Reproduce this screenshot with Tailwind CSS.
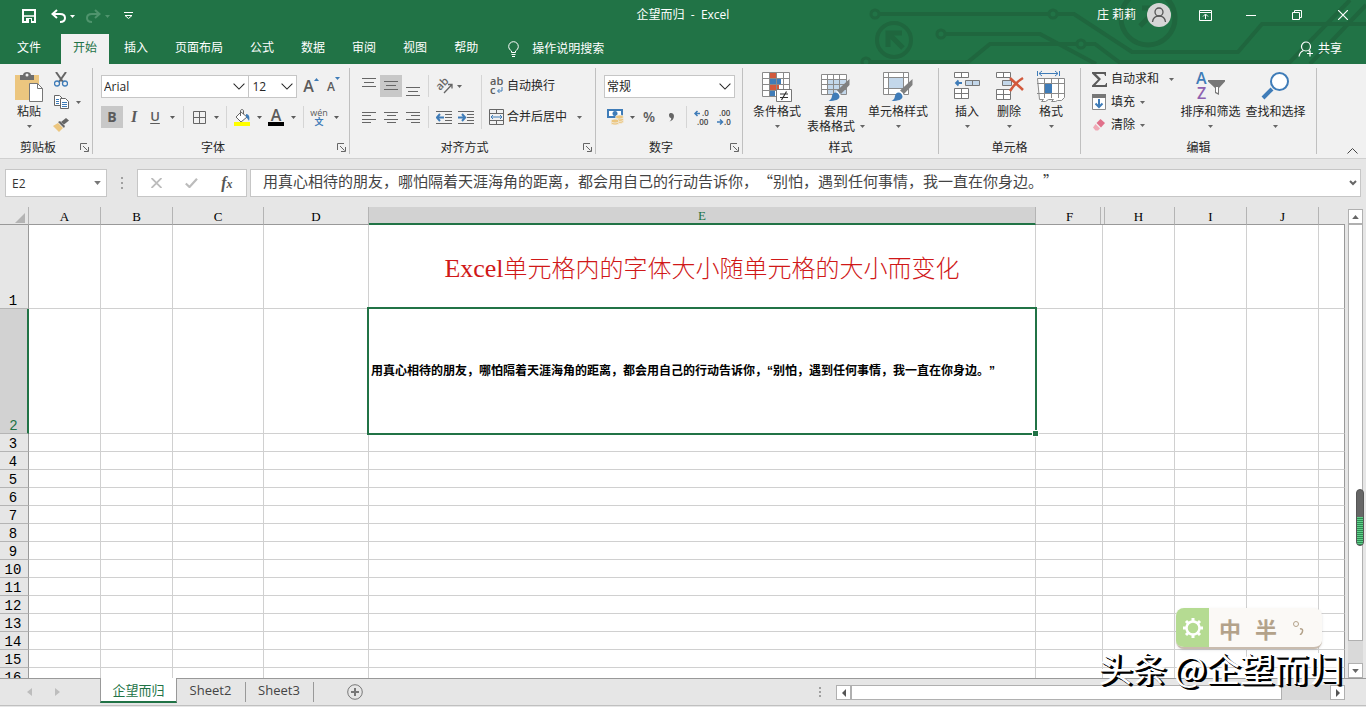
<!DOCTYPE html>
<html lang="zh-CN">

<head>
    <meta charset="UTF-8">
    <meta name="viewport" content="width=device-width, initial-scale=1.0">
    <title>企望而归 - Excel</title>
    <script src="https://cdn.jsdelivr.net/npm/@tailwindcss/browser@4"></script>
</head>

<body class="relative flex h-screen flex-col overflow-hidden bg-[#e6e6e6] font-['Open_Sans','Noto_Sans_CJK_SC',sans-serif] text-xs text-[#333]">
    <!-- Shared icons -->
    <svg class="hidden">
        <symbol id="caret" viewBox="0 0 5 3"><path d="M0 0h5L2.500 3z" fill="currentColor"/></symbol>
        <symbol id="chevron" viewBox="0 0 14 8"><path d="M.7.7 7 7 13.300.7" fill="none" stroke="currentColor" stroke-width="1.200"/></symbol>
        <symbol id="launcher" viewBox="0 0 9 9"><path d="M.5 7V.5H7M3 3l4.500 4.500M8.500 4v4.500H4" fill="none" stroke="#666"/></symbol>
        <symbol id="brush" viewBox="0 0 22 24"><path d="M21.500 1v6L13 16l-4-3.500z" fill="#808080"/><path d="M9 13l4 4-1.500 1.500L7.500 14.500z" fill="#fff"/><path d="M7.500 14.500c2 0 4 2 4 4 0 3-4 4.500-11 4.500 3-1.500 3-3 3.500-5 .5-2 1.500-3.500 3.500-3.500z" fill="#3f7cb8"/></symbol>
    </svg>

    <!-- Title bar and tabs -->
    <header class="relative bg-[#217346] text-white">
        <svg class="absolute top-0 right-0" width="506" height="64" fill="none" stroke="#1f663e" stroke-width="4">
            <circle cx="15" cy="14" r="4" stroke-width="3"/><circle cx="193" cy="14" r="4" stroke-width="3"/>
            <circle cx="81" cy="34" r="4" stroke-width="3"/><circle cx="221" cy="44" r="4" stroke-width="3"/><circle cx="6" cy="62" r="4" stroke-width="3"/>
            <path d="M19 14h170M197 14h17l58 38h106l24-28h104M85 34h95l56 30M10 62h98l22-18h87M225 44h10l24 18h171L490 0M450 64l56-59"/>
            <circle cx="34" cy="40" r="17"/><path d="M28 47V33h14M29 34l14 14" stroke-width="5"/>
            <circle cx="288" cy="18" r="27" stroke-width="5"/><path d="M280 26l14-14M282 8h14v14" stroke-width="5"/>
        </svg>
        <div class="relative grid h-[34px] grid-cols-[1fr_auto_1fr]">
            <div class="flex h-8 items-center pl-[22px]">
                <button aria-label="保存"><svg width="14" height="14" fill="none" stroke="#fff" stroke-width="2"><path d="M1 1h12v12H1z"/><path d="M2 7h10" stroke-width="1.500"/><path d="M4 9h6v4H4z" fill="#fff" stroke="none"/><path d="M7 10h2v4H7z" fill="#217346" stroke="none"/></svg></button>
                <button class="ml-[15px]" aria-label="撤消"><svg width="15" height="14" fill="none" stroke="#fff" stroke-width="2"><path d="M6 1 1.500 5 6 9M2 5h7c3 0 5 1.500 5 4s-2 4-5 4"/></svg></button>
                <button class="ml-1" aria-label="撤消列表"><svg class="h-[3px] w-[5px]"><use href="#caret"/></svg></button>
                <button class="ml-[11px] text-[#4f946d]" aria-label="恢复"><svg width="15" height="14" fill="none" stroke="currentColor" stroke-width="2"><path d="M9 1l4.500 4L9 9M13 5H6C3 5 1 6.500 1 9s2 4 5 4"/></svg></button>
                <button class="ml-1 text-[#4f946d]" aria-label="恢复列表"><svg class="h-[3px] w-[5px]"><use href="#caret"/></svg></button>
                <button class="ml-[14px]" aria-label="自定义快速访问工具栏"><svg width="9" height="8" fill="none" stroke="#fff"><path d="M0 .5h9M1 3.500l3.500 3L8 3.500z"/></svg></button>
            </div>
            <h1 class="leading-[30px]">企望而归&nbsp; -&nbsp; Excel</h1>
            <div class="flex h-[30px] items-center justify-end">
                <span>庄 莉莉</span>
                <button class="mr-[11px] ml-[11px] size-6 rounded-full bg-[#d6d6d6]" aria-label="帐户"><svg width="24" height="24" fill="none" stroke="#555" stroke-width="1.300"><circle cx="12" cy="9" r="4"/><path d="M5.500 19c.5-4 3-6 6.500-6s6 2 6.500 6"/></svg></button>
                <button class="flex w-[46px] justify-center" aria-label="功能区显示选项"><svg width="13" height="11" fill="none" stroke="#fff"><path d="M.5.5h12v10H.5zM1 2.500h11M6.500 9V4.500M4 6.500l2.500-2.500L9 6.500"/></svg></button>
                <button class="flex w-[46px] justify-center" aria-label="最小化"><svg width="10" height="10" stroke="#fff"><path d="M0 5.500h10"/></svg></button>
                <button class="flex w-[46px] justify-center" aria-label="还原"><svg width="10" height="10" fill="none" stroke="#fff"><path d="M.5 2.500h7v7h-7zM2.500 2V.5h7v7H8"/></svg></button>
                <button class="flex w-[46px] justify-center" aria-label="关闭"><svg width="10" height="10" stroke="#fff" stroke-width="1.200"><path d="M0 0l10 10M10 0 0 10"/></svg></button>
            </div>
        </div>
        <nav class="relative flex h-[30px] items-stretch gap-[3px] pl-[5px] leading-[28px]">
            <a href="#" class="mr-[5px] px-3">文件</a>
            <a href="#" class="bg-[#f1f1f1] px-3 text-[#217346]">开始</a>
            <a href="#" class="px-3">插入</a>
            <a href="#" class="px-3">页面布局</a>
            <a href="#" class="px-3">公式</a>
            <a href="#" class="px-3">数据</a>
            <a href="#" class="px-3">审阅</a>
            <a href="#" class="px-3">视图</a>
            <a href="#" class="px-3">帮助</a>
            <button class="ml-[15px] flex items-center gap-[13px]">
                <svg width="11" height="16" fill="none" stroke="#fff"><path d="M3.500 11.500V10C2 9 .7 7.500.7 5.500a4.800 4.800 0 0 1 9.600 0C10.300 7.500 9 9 7.500 10v1.500zM3.500 13.500h4M4 15.500h3"/></svg>
                操作说明搜索
            </button>
            <button class="mr-6 ml-auto flex items-center gap-1">
                <svg width="16" height="16" fill="none" stroke="#fff" stroke-width="1.200"><circle cx="8" cy="5.500" r="4.500"/><path d="M1 15.500c.5-3.500 2-5 4.500-6M10.500 9.500l1.500 1M12 9.500v6M9 12.500h6"/></svg>
                共享
            </button>
        </nav>
    </header>

    <!-- Ribbon -->
    <section class="flex h-[95px] border-b border-[#d0d0d0] bg-[#f1f1f1] py-1 whitespace-nowrap text-[#262626]">
        <!-- Clipboard -->
        <div class="flex w-[93px] flex-col border-r border-[#c0c0c0]">
            <div class="flex flex-1 pl-2">
                <button class="flex w-[42px] flex-col items-center pt-1">
                    <svg width="30" height="30"><path d="M1 3h24v25H1z" fill="#ecc67f"/><path d="M6 3h3c0-4 8-4 8 0h3v5H6z" fill="#6d6d6d"/><circle cx="13" cy="3" r="1.500" fill="#f1f1f1"/><path d="M15.500 11.500h8l5 5v13h-13z" fill="#fff" stroke="#777"/><path d="M23.500 11.500v5h5" fill="none" stroke="#777"/></svg>
                    <span class="mt-0.5 leading-[15px]">粘贴</span>
                    <span class="flex h-[15px] items-center text-[#666]"><svg class="h-[3px] w-[5px]"><use href="#caret"/></svg></span>
                </button>
                <div class="flex flex-col">
                    <button class="flex h-[23px] w-[22px] items-center justify-center" aria-label="剪切"><svg width="14" height="15" fill="none"><path d="M2 0l7 10M12 0 5 10" stroke="#666" stroke-width="2"/><circle cx="3" cy="11.500" r="2.500" stroke="#3f7cb8" stroke-width="1.300"/><circle cx="11" cy="11.500" r="2.500" stroke="#3f7cb8" stroke-width="1.300"/></svg></button>
                    <div class="flex h-[22px] items-center">
                        <button class="flex w-[22px] justify-center" aria-label="复制"><svg width="15" height="14" fill="#fff" stroke="#666"><path d="M.5.5h5l3 3v7h-8z"/><path d="M2 4.500h3M2 6.500h3M2 8.500h3" stroke="#3f7cb8"/><path d="M6.500 3.500h5l3 3v7h-8z"/><path d="M8 7.500h5M8 9.500h5M8 11.500h5" stroke="#3f7cb8"/></svg></button>
                        <button class="flex w-3 justify-center text-[#666]" aria-label="复制选项"><svg class="h-[3px] w-[5px]"><use href="#caret"/></svg></button>
                    </div>
                    <button class="flex h-[23px] w-[22px] items-center justify-center" aria-label="格式刷"><svg width="16" height="14"><path d="M0 8l5-3 5 5-4 4z" fill="#ecc67f"/><path d="M5 4l2-1 5 5-1 2z" fill="#666"/><path d="M8 4l5-4 3 2.500-5 4z" fill="#666"/></svg></button>
                </div>
            </div>
            <div class="flex h-[13px] leading-[13px]"><span class="flex-1 text-center">剪贴板</span><button class="w-4 pl-1" aria-label="剪贴板设置"><svg class="size-[9px]"><use href="#launcher"/></svg></button></div>
        </div>

        <!-- Font -->
        <div class="flex w-[257px] flex-col border-r border-[#c0c0c0]">
            <div class="flex flex-1 flex-col gap-[9px] pt-[7px] pl-2">
                <div class="flex h-[22px] items-center">
                    <div class="relative h-[23px] w-[149px]">
                        <select class="h-full w-full appearance-none border border-[#c6c6c6] bg-white pt-0.5 pl-0.5" aria-label="字体"><option>Arial</option></select>
                        <svg class="pointer-events-none absolute top-2 right-1 h-[7px] w-3"><use href="#chevron"/></svg>
                    </div>
                    <div class="relative h-[23px] w-[48px]">
                        <select class="h-full w-full appearance-none border border-l-0 border-[#c6c6c6] bg-white pt-0.5 pl-[3px]" aria-label="字号"><option>12</option></select>
                        <svg class="pointer-events-none absolute top-2 right-1 h-[7px] w-3"><use href="#chevron"/></svg>
                    </div>
                    <button class="ml-1.5 flex w-[22px] text-base leading-4 font-semibold text-[#5b5b5b]" aria-label="增大字号">A<svg class="text-[#3f7cb8]" width="5" height="3"><path d="M2.500 0 5 3H0z" fill="currentColor"/></svg></button>
                    <button class="ml-0.5 flex w-[22px] text-xs leading-4 font-semibold text-[#5b5b5b]" aria-label="减小字号"><span class="pt-0.5">A</span><svg class="h-[3px] w-[5px] text-[#3f7cb8]"><use href="#caret"/></svg></button>
                </div>
                <div class="flex h-[22px] items-center text-[#5b5b5b]">
                    <button class="h-full w-[22px] bg-[#c8c8c8] text-sm font-bold" aria-label="加粗">B</button>
                    <button class="w-[22px] font-['Liberation_Serif'] text-base font-bold italic" aria-label="倾斜">I</button>
                    <button class="w-5 text-[13px] font-semibold underline underline-offset-2" aria-label="下划线">U</button>
                    <button class="flex w-[14px] justify-center" aria-label="下划线选项"><svg class="h-[3px] w-[5px]"><use href="#caret"/></svg></button>
                    <i class="mx-1 h-[22px] w-px bg-[#d5d5d5]"></i>
                    <button class="flex w-[22px] justify-center" aria-label="边框"><svg width="13" height="13" fill="none" stroke="#666"><path d="M.5.5h12v12H.5zM6.500 0v13M0 6.500h13"/></svg></button>
                    <button class="flex w-3 justify-center" aria-label="边框选项"><svg class="h-[3px] w-[5px]"><use href="#caret"/></svg></button>
                    <i class="mx-1 h-[22px] w-px bg-[#d5d5d5]"></i>
                    <button class="flex w-[22px] justify-center" aria-label="填充颜色"><svg width="16" height="17"><path d="M7 3l6 5-6 5-5-5z" fill="#fff" stroke="#666"/><path d="M6.500 7V2c0-2 3-2 3 0v3" fill="none" stroke="#666"/><path d="M12 5c3 0 4 3 3 7-1-2-2-3-3-4z" fill="#3f7cb8"/><path d="M0 13h16v4H0z" fill="#ff0"/></svg></button>
                    <button class="flex w-3 justify-center" aria-label="填充颜色选项"><svg class="h-[3px] w-[5px]"><use href="#caret"/></svg></button>
                    <button class="flex w-[22px] flex-col items-center text-base leading-[13px] font-semibold" aria-label="字体颜色">A<i class="h-1 w-4 bg-black"></i></button>
                    <button class="flex w-3 justify-center" aria-label="字体颜色选项"><svg class="h-[3px] w-[5px]"><use href="#caret"/></svg></button>
                    <i class="mx-1 h-[22px] w-px bg-[#d5d5d5]"></i>
                    <button class="flex w-[22px] flex-col items-center text-[9px] leading-[9px]" aria-label="拼音">wén<span class="font-bold text-[#3f7cb8]">文</span></button>
                    <button class="flex w-3 justify-center" aria-label="拼音选项"><svg class="h-[3px] w-[5px]"><use href="#caret"/></svg></button>
                </div>
            </div>
            <div class="flex h-[13px] leading-[13px]"><span class="flex-1 text-center">字体</span><button class="w-4 pl-1" aria-label="字体设置"><svg class="size-[9px]"><use href="#launcher"/></svg></button></div>
        </div>

        <!-- Alignment -->
        <div class="flex w-[246px] flex-col border-r border-[#c0c0c0]">
            <div class="flex flex-1 pt-[7px] pl-2">
                <div class="flex flex-col gap-[9px] text-[#666]">
                    <div class="flex h-[22px] items-center">
                        <button class="flex h-full w-[22px] justify-center pt-[3px]" aria-label="顶端对齐"><svg width="14" height="10" stroke="#666"><path d="M0 .5h14M2 4.500h10M0 8.500h14"/></svg></button>
                        <button class="flex h-full w-[22px] items-center justify-center bg-[#c8c8c8]" aria-label="垂直居中"><svg width="14" height="10" stroke="#666"><path d="M0 .5h14M2 4.500h10M0 8.500h14"/></svg></button>
                        <button class="flex h-full w-[22px] items-end justify-center" aria-label="底端对齐"><svg width="14" height="10" stroke="#666"><path d="M0 .5h14M2 4.500h10M0 8.500h14"/></svg></button>
                        <i class="mx-1 h-[22px] w-px bg-[#d5d5d5]"></i>
                        <button class="flex w-[22px] justify-center" aria-label="方向"><svg class="overflow-visible" width="17" height="16"><text x="0" y="0" transform="translate(4 13) rotate(-45)" font-size="11" font-weight="600" fill="#666">ab</text><path d="M8 15 15.500 7M12 6.500h4v4" fill="none" stroke="#666" stroke-width="1.300"/></svg></button>
                        <button class="flex w-2 justify-center" aria-label="方向选项"><svg class="h-[3px] w-[5px]"><use href="#caret"/></svg></button>
                    </div>
                    <div class="flex h-[22px] items-center">
                        <button class="flex w-[22px] justify-center" aria-label="左对齐"><svg width="14" height="11" stroke="#666"><path d="M0 .5h14M0 3.500h9M0 7.500h14M0 10.500h9"/></svg></button>
                        <button class="flex w-[22px] justify-center" aria-label="居中"><svg width="14" height="11" stroke="#666"><path d="M0 .5h14M3 3.500h9M0 7.500h14M3 10.500h9"/></svg></button>
                        <button class="flex w-[22px] justify-center" aria-label="右对齐"><svg width="14" height="11" stroke="#666"><path d="M0 .5h14M5 3.500h9M0 7.500h14M5 10.500h9"/></svg></button>
                        <i class="mx-1 h-[22px] w-px bg-[#d5d5d5]"></i>
                        <button class="flex w-[22px] justify-center" aria-label="减少缩进量"><svg width="16" height="13" stroke="#666"><path d="M0 .5h16M9 3.500h7M9 6.500h7M9 9.500h7M0 12.500h16"/><path d="M1 6.500h7M4 3 .8 6.500 4 10" fill="none" stroke="#3f7cb8" stroke-width="2"/></svg></button>
                        <button class="flex w-[22px] justify-center" aria-label="增加缩进量"><svg width="16" height="13" stroke="#666"><path d="M0 .5h16M9 3.500h7M9 6.500h7M9 9.500h7M0 12.500h16"/><path d="M0 6.500h7M4 3l3.200 3.500L4 10" fill="none" stroke="#3f7cb8" stroke-width="2"/></svg></button>
                    </div>
                </div>
                <i class="mx-1 h-[54px] w-px bg-[#d5d5d5]"></i>
                <div class="flex flex-col gap-[9px]">
                    <button class="flex h-[22px] items-center">
                        <svg class="mr-px overflow-visible" width="20" height="18"><text x="4" y="8" font-size="11" font-weight="600" fill="#5b5b5b">ab</text><text x="4" y="17" font-size="11" font-weight="600" fill="#5b5b5b">c</text><path d="M16 10v4h-4M13.500 12 11.500 14l2 2" fill="none" stroke="#3f7cb8"/></svg>
                        自动换行
                    </button>
                    <button class="flex h-[22px] items-center">
                        <svg class="mr-px" width="20" height="16" fill="none" stroke="#666"><path d="M3.500.5h14v15h-14zM4 4.500h13M4 11.500h13M10.500 0v4M10.500 12v3"/><path d="M5 8h11M7 6 5 8l2 2M14 6l2 2-2 2" stroke="#3f7cb8"/></svg>
                        合并后居中
                        <svg class="ml-2.5 h-[3px] w-[5px] text-[#666]"><use href="#caret"/></svg>
                    </button>
                </div>
            </div>
            <div class="flex h-[13px] leading-[13px]"><span class="flex-1 text-center">对齐方式</span><button class="w-4 pl-1" aria-label="对齐设置"><svg class="size-[9px]"><use href="#launcher"/></svg></button></div>
        </div>

        <!-- Number -->
        <div class="flex w-[147px] flex-col border-r border-[#c0c0c0]">
            <div class="flex flex-1 flex-col gap-[9px] pt-[7px] pl-2">
                <div class="flex h-[22px] items-center">
                    <div class="relative h-[23px] w-[131px]">
                        <select class="h-full w-full appearance-none border border-[#c6c6c6] bg-white pt-0.5 pl-0.5" aria-label="数字格式"><option>常规</option></select>
                        <svg class="pointer-events-none absolute top-2 right-1 h-[7px] w-3"><use href="#chevron"/></svg>
                    </div>
                </div>
                <div class="flex h-[22px] items-center text-[#5b5b5b]">
                    <button class="flex w-[22px] justify-center" aria-label="会计数字格式"><svg width="17" height="16"><path d="M1 1h14v7H1z" fill="#fff" stroke="#3f7cb8" stroke-width="2"/><circle cx="8" cy="4.500" r="2.500" fill="#3f7cb8"/><g fill="#ecc67f" stroke="#f1f1f1" stroke-width=".7"><ellipse cx="12.500" cy="12.500" rx="4" ry="2"/><ellipse cx="12.500" cy="10.500" rx="4" ry="2"/><ellipse cx="12.500" cy="8" rx="4" ry="2"/><ellipse cx="8" cy="14" rx="4" ry="2"/><ellipse cx="8" cy="12" rx="4" ry="2"/></g></svg></button>
                    <button class="flex w-3 justify-center" aria-label="会计格式选项"><svg class="h-[3px] w-[5px]"><use href="#caret"/></svg></button>
                    <button class="w-[22px] text-sm font-semibold" aria-label="百分比样式">%</button>
                    <button class="flex w-[22px] justify-center" aria-label="千位分隔样式"><svg width="6" height="9"><path d="M1 2c0-3 5-2.500 5 1 0 3-2 5-4.500 5.500C3 7.500 3.500 6 3 5 2 5 1 4 1 2z" fill="#666"/></svg></button>
                    <i class="mx-1 h-[22px] w-px bg-[#d5d5d5]"></i>
                    <button class="flex w-[22px] justify-center" aria-label="增加小数位数"><svg class="overflow-visible" width="16" height="15" fill="#444" font-size="8" font-weight="600"><path d="M1 3.500h5M3.500 1 1 3.500 3.500 6" fill="none" stroke="#3f7cb8" stroke-width="1.500"/><text x="8" y="6">.0</text><text x="3" y="15">.00</text></svg></button>
                    <button class="flex w-[22px] justify-center" aria-label="减少小数位数"><svg class="overflow-visible" width="16" height="15" fill="#444" font-size="8" font-weight="600"><text x="3" y="6">.00</text><path d="M1 12h5M4 9.500 6.500 12 4 14.500" fill="none" stroke="#3f7cb8" stroke-width="1.500"/><text x="8" y="15">.0</text></svg></button>
                </div>
            </div>
            <div class="flex h-[13px] leading-[13px]"><span class="flex-1 text-center">数字</span><button class="w-4 pl-1" aria-label="数字设置"><svg class="size-[9px]"><use href="#launcher"/></svg></button></div>
        </div>

        <!-- Styles -->
        <div class="flex w-[196px] flex-col border-r border-[#c0c0c0]">
            <div class="flex flex-1 pl-0.5">
                <button class="flex w-16 flex-col items-center pt-1">
                    <svg width="30" height="30"><path d="M.5.5h27v24H.5z" fill="#fff"/><path d="M8 1h6v5H8zM8 13h9v5H8z" fill="#d2593c"/><path d="M8 7h11v5H8zM8 19h5v5H8z" fill="#3f7cb8"/><path d="M.5.5h27v24H.5zM7.500 0v24M14.500 0v24M21.500 0v24M0 6.500h28M0 12.500h28M0 18.500h28" fill="none" stroke="#8a8a8a"/><path d="M14.500 17.500h15v12h-15z" fill="#fff" stroke="#777"/><path d="M18 22h8M18 25.500h8M24.500 19.500l-5 8.500" stroke="#333" stroke-width="1.200"/></svg>
                    <span class="mt-0.5 leading-[15px]">条件格式</span>
                    <span class="flex h-[15px] items-center text-[#666]"><svg class="h-[3px] w-[5px]"><use href="#caret"/></svg></span>
                </button>
                <button class="flex w-[54px] flex-col items-center pt-1">
                    <svg width="30" height="30"><path d="M.5 2.500h25v20H.5z" fill="#fff"/><path d="M7 8h18v14H7z" fill="#c3d7ea"/><path d="M.5 2.500h25v20H.5zM6.500 2v20M12.500 2v20M18.500 2v20M0 7.500h26M0 12.500h26M0 17.500h26" fill="none" stroke="#8a8a8a"/><use href="#brush" x="7" y="6" width="22" height="24"/></svg>
                    <span class="mt-0.5 leading-[15px]">套用</span>
                    <span class="flex items-center gap-[5px] leading-[15px]">表格格式<svg class="h-[3px] w-[5px] text-[#666]"><use href="#caret"/></svg></span>
                </button>
                <button class="flex w-[70px] flex-col items-center pt-1">
                    <svg width="30" height="30"><path d="M.5.5h25v22H.5z" fill="#fff"/><path d="M.5.5h25v22H.5zM5.500 0v22M20.500 0v22M0 5.500h26M0 16.500h26" fill="none" stroke="#8a8a8a"/><path d="M6 6h14v10H6z" fill="#c3d7ea"/><use href="#brush" x="8" y="6" width="22" height="24"/></svg>
                    <span class="mt-0.5 leading-[15px]">单元格样式</span>
                    <span class="flex h-[15px] items-center text-[#666]"><svg class="h-[3px] w-[5px]"><use href="#caret"/></svg></span>
                </button>
            </div>
            <div class="h-[13px] text-center leading-[13px]">样式</div>
        </div>

        <!-- Cells -->
        <div class="flex w-[142px] flex-col border-r border-[#c0c0c0]">
            <div class="flex flex-1 pl-[7px]">
                <button class="flex w-[42px] flex-col items-center pt-1">
                    <svg width="26" height="30" fill="#fff" stroke="#777"><path d="M.5.500h14v5h-14zM7.500 0v6M.5 16.500h14v10h-14zM7.500 16v11M0 21.500h15"/><path d="M11.500 8.500h14v5h-14zM18.500 8v6" fill="#c3d7ea"/><path d="M2 11h6M4.500 8.500 2 11l2.500 2.500" fill="none" stroke="#3f7cb8" stroke-width="1.800"/></svg>
                    <span class="mt-0.5 leading-[15px]">插入</span>
                    <span class="flex h-[15px] items-center text-[#666]"><svg class="h-[3px] w-[5px]"><use href="#caret"/></svg></span>
                </button>
                <button class="flex w-[42px] flex-col items-center pt-1">
                    <svg width="30" height="30" fill="#fff" stroke="#777"><path d="M2.500.500h14v5h-14zM9.500 0v6M2.500 17.500h14v10h-14zM9.500 17v11M2 22.500h15"/><path d="M8.500 8.500h9v5h-9z" fill="#c3d7ea"/><path d="M16 6c4 4 9 8 13 12M29 6c-5 3-10 8-13 13" fill="none" stroke="#d2593c" stroke-width="2.500"/></svg>
                    <span class="mt-0.5 leading-[15px]">删除</span>
                    <span class="flex h-[15px] items-center text-[#666]"><svg class="h-[3px] w-[5px]"><use href="#caret"/></svg></span>
                </button>
                <button class="flex w-[42px] flex-col items-center pt-0.5">
                    <svg width="28" height="32"><path d="M.5 1v5M22.500 1v5M2 3.500h19M5 1 2 3.500 5 6M18 1l3 2.500L18 6" fill="none" stroke="#3f7cb8"/><path d="M.5 8.500h27v19l-3 3h-4l-2 1h-4l2-2h-5l-3 2h-4l2-2h-4z" fill="#fff" stroke="#8a8a8a"/><path d="M7.500 8v20M14.500 8v20M21.500 8v20M0 13.500h28M0 23.500h28" stroke="#8a8a8a"/><path d="M8 14h7v9H8z" fill="#3f7cb8"/></svg>
                    <span class="mt-0.5 leading-[15px]">格式</span>
                    <span class="flex h-[15px] items-center text-[#666]"><svg class="h-[3px] w-[5px]"><use href="#caret"/></svg></span>
                </button>
            </div>
            <div class="h-[13px] text-center leading-[13px]">单元格</div>
        </div>

        <!-- Editing -->
        <div class="flex w-[236px] flex-col border-r border-[#c0c0c0]">
            <div class="flex flex-1 pl-[11px]">
                <div class="flex w-[86px] flex-col">
                    <button class="flex h-[22px] items-center gap-1">
                        <svg width="15" height="15"><path d="M0 0h14v4h-1c0-1.500-1-2-2-2H4l5 5-5.500 6H12c1 0 2-.5 2-2h1v4H0v-1.500L6 7.500 0 1.500z" fill="#5b5b5b"/></svg>
                        自动求和
                        <svg class="ml-1.5 h-[3px] w-[5px] text-[#666]"><use href="#caret"/></svg>
                    </button>
                    <button class="flex h-6 items-center gap-[5px]">
                        <svg width="14" height="16"><path d="M.5.5h13v15H.5z" fill="#fff" stroke="#8a8a8a"/><path d="M0 0h14v4H0z" fill="#777"/><path d="M7 5v8M3.500 9.500 7 13l3.500-3.500" fill="none" stroke="#3f7cb8" stroke-width="2"/></svg>
                        填充
                        <svg class="h-[3px] w-[5px] text-[#666]"><use href="#caret"/></svg>
                    </button>
                    <button class="flex h-[22px] items-center gap-[5px]">
                        <svg width="14" height="14"><path d="M8.500 1 13 5 9 9.500 4.500 5z" fill="#e0708a"/><path d="M3.500 6 8 10.500 6 12.500H3.500L1 9.500z" fill="#f0a9b6"/></svg>
                        清除
                        <svg class="h-[3px] w-[5px] text-[#666]"><use href="#caret"/></svg>
                    </button>
                </div>
                <button class="flex w-[65px] flex-col items-center pt-1">
                    <svg class="overflow-visible" width="30" height="30" font-size="16" font-weight="600"><text x="0" y="12" fill="#3f7cb8">A</text><text x="1" y="27" fill="#8e62b0">Z</text><path d="M12 8h17v1.500L23 16v7l-4-2v-5l-7-6.500z" fill="#777"/><path d="M20 15h2v6l-2-1z" fill="#fff"/></svg>
                    <span class="mt-0.5 leading-[15px]">排序和筛选</span>
                    <span class="flex h-[15px] items-center text-[#666]"><svg class="h-[3px] w-[5px]"><use href="#caret"/></svg></span>
                </button>
                <button class="flex w-[65px] flex-col items-center pt-1">
                    <svg width="30" height="30" stroke="#3f7cb8"><path d="M2 26 11 17" stroke-width="4"/><circle cx="18.500" cy="9.500" r="8.500" fill="#fff" stroke-width="2"/></svg>
                    <span class="mt-0.5 leading-[15px]">查找和选择</span>
                    <span class="flex h-[15px] items-center text-[#666]"><svg class="h-[3px] w-[5px]"><use href="#caret"/></svg></span>
                </button>
            </div>
            <div class="h-[13px] text-center leading-[13px]">编辑</div>
        </div>
        <button class="mr-2 ml-auto self-end" aria-label="折叠功能区"><svg width="11" height="6" fill="none" stroke="#444"><path d="M.5 5.500l5-5 5 5"/></svg></button>
    </section>

    <!-- Formula bar -->
    <section class="flex h-12 pt-[10px] pr-[5px] pl-[5px]">
        <div class="relative h-7 w-[102px]">
            <input class="h-full w-full border border-[#c6c6c6] bg-white pl-1.5" aria-label="名称框" value="E2">
            <svg class="pointer-events-none absolute top-3 right-1.5 h-1 w-[7px] text-[#777]" preserveAspectRatio="none"><use href="#caret"/></svg>
        </div>
        <svg class="mt-2 ml-3.5" width="2" height="12" fill="#a0a0a0"><path d="M0 0h2v2H0zM0 5h2v2H0zM0 10h2v2H0z"/></svg>
        <div class="ml-3.5 flex h-7 w-[110px] items-center justify-around border border-[#c6c6c6] bg-white px-0.5">
            <button aria-label="取消"><svg width="11" height="10" stroke="#bcbcbc" stroke-width="1.800"><path d="M.5 0l10 10M10.500 0l-10 10"/></svg></button>
            <button aria-label="输入"><svg width="13" height="10" fill="none" stroke="#bcbcbc" stroke-width="2.200"><path d="M.8 5.500 4.500 9 12 .8"/></svg></button>
            <button class="font-['Liberation_Serif'] text-base leading-5 font-bold text-[#555] italic" aria-label="插入函数">f<span class="text-xs">x</span></button>
        </div>
        <div class="relative ml-[3px] h-7 flex-1">
            <input class="h-full w-full border border-[#c6c6c6] bg-white pr-6 pb-1.5 pl-3 font-['Noto_Sans_CJK_SC',sans-serif] text-[15px] text-[#444] [text-spacing-trim:space-all]" aria-label="编辑栏" value="用真心相待的朋友，哪怕隔着天涯海角的距离，都会用自己的行动告诉你，“别怕，遇到任何事情，我一直在你身边。”">
            <svg class="pointer-events-none absolute top-[11px] right-1 h-[6px] w-[8px]" fill="none" stroke="#666" stroke-width="2"><path d="M1 1l3 3 3-3"/></svg>
        </div>
    </section>

    <!-- Sheet -->
    <main class="flex min-h-0 flex-1">
        <div class="min-w-0 flex-1 overflow-hidden">
            <table class="w-full table-fixed border-separate border-spacing-0 bg-white font-['Liberation_Serif','Noto_Sans_CJK_SC',serif] text-black">
                <colgroup>
                    <col class="w-[29px]"><col class="w-[72px]"><col class="w-[72px]"><col class="w-[91px]"><col class="w-[105px]"><col><col class="w-[67px]"><col class="w-[72px]"><col class="w-[72px]"><col class="w-[72px]"><col class="w-[26px]">
                </colgroup>
                <thead class="bg-[#e6e6e6] text-[13px] leading-[14px]">
                    <tr class="h-[18px]">
                        <th class="border-r border-b border-r-[#b4b4b4] border-b-[#999] p-0"><svg class="mt-1 ml-auto mr-[3px]" width="10" height="10"><path d="M10 0v10H0z" fill="#b4b4b4"/></svg></th>
                        <th class="border-r border-b border-r-[#b4b4b4] border-b-[#999] p-0 pt-[3px] font-normal">A</th>
                        <th class="border-r border-b border-r-[#b4b4b4] border-b-[#999] p-0 pt-[3px] font-normal">B</th>
                        <th class="border-r border-b border-r-[#b4b4b4] border-b-[#999] p-0 pt-[3px] font-normal">C</th>
                        <th class="border-r border-b border-r-[#b4b4b4] border-b-[#999] p-0 pt-[3px] font-normal">D</th>
                        <th class="border-r border-b-2 border-r-[#b4b4b4] border-b-[#217346] bg-[#d2d2d2] p-0 pt-0.5 font-normal text-[#217346]">E</th>
                        <th class="relative border-b border-b-[#999] p-0 pt-[3px] font-normal">F<i class="absolute top-0 -right-0.5 h-full w-[5px] border-x border-[#b4b4b4] bg-[#e6e6e6]"></i></th>
                        <th class="border-r border-b border-r-[#b4b4b4] border-b-[#999] p-0 pt-[3px] font-normal">H</th>
                        <th class="border-r border-b border-r-[#b4b4b4] border-b-[#999] p-0 pt-[3px] font-normal">I</th>
                        <th class="border-r border-b border-r-[#b4b4b4] border-b-[#999] p-0 pt-[3px] font-normal">J</th>
                        <th class="border-b border-b-[#999] p-0"></th>
                    </tr>
                </thead>
                <tbody id="rows">
                    <tr class="h-[84px]">
                        <th class="border-r border-b border-r-[#999] border-b-[#b4b4b4] bg-[#e6e6e6] p-0 pr-0.5 align-bottom font-['Liberation_Mono'] text-sm leading-[13px] font-normal">1</th>
                        <td class="border-r border-b border-[#d0d0d0] p-0"></td>
                        <td class="border-r border-b border-[#d0d0d0] p-0"></td>
                        <td class="border-r border-b border-[#d0d0d0] p-0"></td>
                        <td class="border-r border-b border-[#d0d0d0] p-0"></td>
                        <td class="border-r border-b border-[#d0d0d0] p-0 pt-1.5 text-center text-2xl font-light text-[#d01818]"><span class="text-[26px]">Excel</span>单元格内的字体大小随单元格的大小而变化</td>
                        <td class="border-r border-b border-[#d0d0d0] p-0"></td>
                        <td class="border-r border-b border-[#d0d0d0] p-0"></td>
                        <td class="border-r border-b border-[#d0d0d0] p-0"></td>
                        <td class="border-r border-b border-[#d0d0d0] p-0"></td>
                        <td class="border-r border-b border-r-[#999] border-b-[#d0d0d0] p-0"></td>
                    </tr>
                    <tr class="h-[125px]">
                        <th class="border-r-2 border-b border-r-[#217346] border-b-[#b4b4b4] bg-[#d2d2d2] p-0 align-bottom font-['Liberation_Mono'] text-sm leading-[13px] font-normal text-[#217346]">2</th>
                        <td class="border-r border-b border-[#d0d0d0] p-0"></td>
                        <td class="border-r border-b border-[#d0d0d0] p-0"></td>
                        <td class="border-r border-b border-[#d0d0d0] p-0"></td>
                        <td class="border-r border-b border-[#d0d0d0] p-0"></td>
                        <td class="relative border-r border-b border-[#d0d0d0] p-0 pl-0.5 font-['Liberation_Sans','Noto_Sans_CJK_SC',sans-serif] text-xs font-bold whitespace-nowrap [text-spacing-trim:space-all]">
                            用真心相待的朋友，哪怕隔着天涯海角的距离，都会用自己的行动告诉你，“别怕，遇到任何事情，我一直在你身边。”
                            <i class="absolute -inset-0.5 border-2 border-[#217346]"></i>
                            <i class="absolute -right-1 -bottom-1 size-[7px] border border-white bg-[#217346]"></i>
                        </td>
                        <td class="border-r border-b border-[#d0d0d0] p-0"></td>
                        <td class="border-r border-b border-[#d0d0d0] p-0"></td>
                        <td class="border-r border-b border-[#d0d0d0] p-0"></td>
                        <td class="border-r border-b border-[#d0d0d0] p-0"></td>
                        <td class="border-r border-b border-r-[#999] border-b-[#d0d0d0] p-0"></td>
                    </tr>
                </tbody>
            </table>
        </div>
        <div class="mr-[3px] ml-[3px] flex w-[15px] flex-col pt-0.5">
            <button class="flex h-[15px] items-center justify-center border border-[#b0b0b0] bg-white text-[#666]" aria-label="向上滚动"><svg class="h-1 w-[7px] rotate-180"><use href="#caret"/></svg></button>
            <div class="flex-1 bg-[#d9d9d9]"><div class="h-[95%] border border-[#b0b0b0] bg-white"></div></div>
            <button class="flex h-[15px] items-center justify-center border border-[#b0b0b0] bg-white text-[#666]" aria-label="向下滚动"><svg class="h-1 w-[7px]"><use href="#caret"/></svg></button>
        </div>
    </main>

    <!-- Sheet tabs -->
    <footer class="mb-px flex h-7 border-b border-[#c0c0c0] text-[13px]">
        <div class="flex w-[100px] items-center gap-[23px] border-t border-[#999] pl-[27px] text-[#bdbdbd]">
            <button aria-label="上一个工作表"><svg width="5" height="8"><path d="M5 0v8L0 4z" fill="currentColor"/></svg></button>
            <button aria-label="下一个工作表"><svg width="5" height="8"><path d="M0 0v8l5-4z" fill="currentColor"/></svg></button>
        </div>
        <a href="#" class="h-[25px] w-[77px] border-x border-b-2 border-x-[#999] border-b-[#217346] bg-white text-center leading-6 text-[#217346]">企望而归</a>
        <div class="flex flex-1 items-start border-t border-[#999] text-[#444]">
            <a href="#" class="mt-[3px] h-5 w-[69px] border-r border-[#999] pr-px text-center leading-[17px]">Sheet2</a>
            <a href="#" class="mt-[3px] h-5 w-[68px] border-r border-[#999] pr-px text-center leading-[17px]">Sheet3</a>
            <button class="mt-[5px] ml-[33px]" aria-label="新工作表"><svg width="16" height="16" fill="none" stroke="#777"><circle cx="8" cy="8" r="7.300"/><path d="M8 4v8M4 8h8" stroke-width="2"/></svg></button>
            <svg class="mt-2 ml-auto mr-[15px]" width="2" height="10" fill="#a0a0a0"><path d="M0 0h2v2H0zM0 4h2v2H0zM0 8h2v2H0z"/></svg>
        </div>
        <div class="flex w-[530px] items-start border-t border-[#999] pt-1.5 pr-[21px]">
            <button class="flex size-[15px] items-center justify-center border border-[#b0b0b0] bg-white text-[#555]" aria-label="向左滚动"><svg width="4" height="8"><path d="M4 0v8L0 4z" fill="currentColor"/></svg></button>
            <div class="h-[15px] flex-1 bg-[#d9d9d9]"><div class="h-full w-[90%] border border-[#b0b0b0] bg-white"></div></div>
            <button class="flex size-[15px] items-center justify-center border border-[#b0b0b0] bg-white text-[#555]" aria-label="向右滚动"><svg width="4" height="8"><path d="M0 0v8l4-4z" fill="currentColor"/></svg></button>
        </div>
    </footer>

    <!-- Edge meter -->
    <div class="absolute right-0.5 bottom-[161px] flex h-[57px] w-2 items-end overflow-hidden rounded-full border border-[#555] bg-[#666]">
        <div class="h-7 w-full bg-[repeating-linear-gradient(#5fd08a_0_1px,#2f8a52_1px_2px)]"></div>
    </div>

    <!-- Input method bar -->
    <div class="absolute right-11 bottom-[58px] flex h-[41px] w-[146px] items-stretch overflow-hidden rounded-lg border-b-2 border-[#c9bcae] bg-[#fbf9f6] font-['Noto_Sans_CJK_SC',sans-serif] text-[22px] font-bold text-[#b3a28a] shadow">
        <button class="flex w-[33px] items-center justify-center bg-[#b5db92]" aria-label="输入法设置"><svg width="22" height="22" fill="none" stroke="#fff"><circle cx="11" cy="11" r="6.500" stroke-width="2.500"/><path d="M11 1v3M11 18v3M1 11h3M18 11h3M4 4l2 2M16 16l2 2M4 18l2-2M16 6l2-2" stroke-width="3"/></svg></button>
        <button class="ml-2.5 flex w-[22px] items-center leading-6">中</button>
        <button class="ml-3.5 flex w-[22px] items-center leading-6">半</button>
        <button class="ml-4 flex items-center" aria-label="标点"><svg width="12" height="14" fill="none" stroke="#b3a28a"><circle cx="3" cy="3" r="2.500"/><path d="M7 8c3-1 4 3 0 6" stroke-width="1.500"/></svg></button>
    </div>

    <!-- Signature -->
    <div class="absolute right-6 bottom-4 font-['Noto_Sans_CJK_SC',sans-serif] text-[34px] leading-[46px] whitespace-nowrap text-white [text-shadow:1px_1px_0_#000,2px_2px_0_#000,3px_2px_0_#000]">头条 @企望而归</div>

    <script>
        // Empty rows below the filled ones
        const rows = document.getElementById('rows');
        for (let n = 3; n <= 16; n++) {
            rows.insertAdjacentHTML('beforeend', `<tr class="h-[18px]">
                <th class="border-r border-b border-r-[#999] border-b-[#b4b4b4] bg-[#e6e6e6] p-0 pr-0.5 align-bottom font-['Liberation_Mono'] text-sm leading-[13px] font-normal">${n}</th>
                ${'<td class="border-r border-b border-[#d0d0d0] p-0"></td>'.repeat(9)}
                <td class="border-r border-b border-r-[#999] border-b-[#d0d0d0] p-0"></td>
            </tr>`);
        }
    </script>
</body>

</html>
